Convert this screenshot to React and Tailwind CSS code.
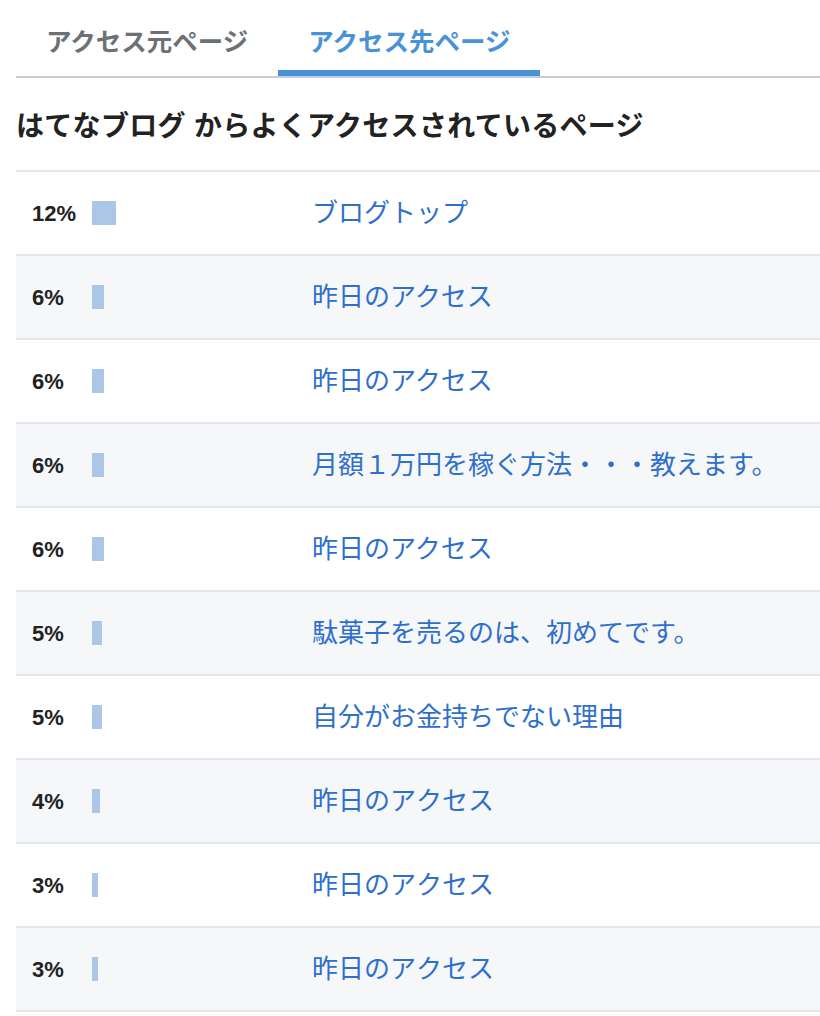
import React from 'react';

const rows = [
  { pct: 12, title: 'ブログトップ' },
  { pct: 6, title: '昨日のアクセス' },
  { pct: 6, title: '昨日のアクセス' },
  { pct: 6, title: '月額１万円を稼ぐ方法・・・教えます。' },
  { pct: 6, title: '昨日のアクセス' },
  { pct: 5, title: '駄菓子を売るのは、初めてです。' },
  { pct: 5, title: '自分がお金持ちでない理由' },
  { pct: 4, title: '昨日のアクセス' },
  { pct: 3, title: '昨日のアクセス' },
  { pct: 3, title: '昨日のアクセス' },
];

const font = "font-['Liberation_Sans','Noto_Sans_CJK_JP',sans-serif]";

const App = () => {
  return (
    <div className={`w-[820px] min-h-[1016px] bg-white pl-4 ${font}`}>
      {/* Tabs */}
      <div className="flex pt-[26px] border-b-2 border-[#c5ced6]">
        <div className="px-[30px] pb-[12px] leading-[32px] text-[25.5px] font-bold text-[#6c7176] border-b-[6px] border-transparent">
          アクセス元ページ
        </div>
        <div className="px-[30px] pb-[12px] leading-[32px] text-[25.5px] font-bold text-[#4a92d8] border-b-[6px] border-[#4a92d8]">
          アクセス先ページ
        </div>
      </div>

      {/* Heading */}
      <h2 className="mt-[29px] mb-[23px] leading-[40px] text-[28px] tracking-[0.3px] font-bold text-[#222222]">
        はてなブログ からよくアクセスされているページ
      </h2>

      {/* Table */}
      <div className="border-t-2 border-[#e4e7eb]">
        {rows.map((row, i) => (
          <div
            key={i}
            className={`flex items-center h-[84px] border-b-2 border-[#e4e7eb] ${i % 2 === 1 ? 'bg-[#f6f7f9]' : 'bg-white'}`}
          >
            <div className="flex items-center w-[296px] pl-4">
              <span className="w-[60px] text-[22px] font-bold text-[#222222]">{row.pct}%</span>
              <span className="h-[24px] bg-[#abc6e6]" style={{ width: row.pct * 2 }}></span>
            </div>
            <a href="#" className="text-[26px] text-[#2f6fcc] leading-[34px]">
              {row.title}
            </a>
          </div>
        ))}
      </div>
    </div>
  );
};

export default App;
